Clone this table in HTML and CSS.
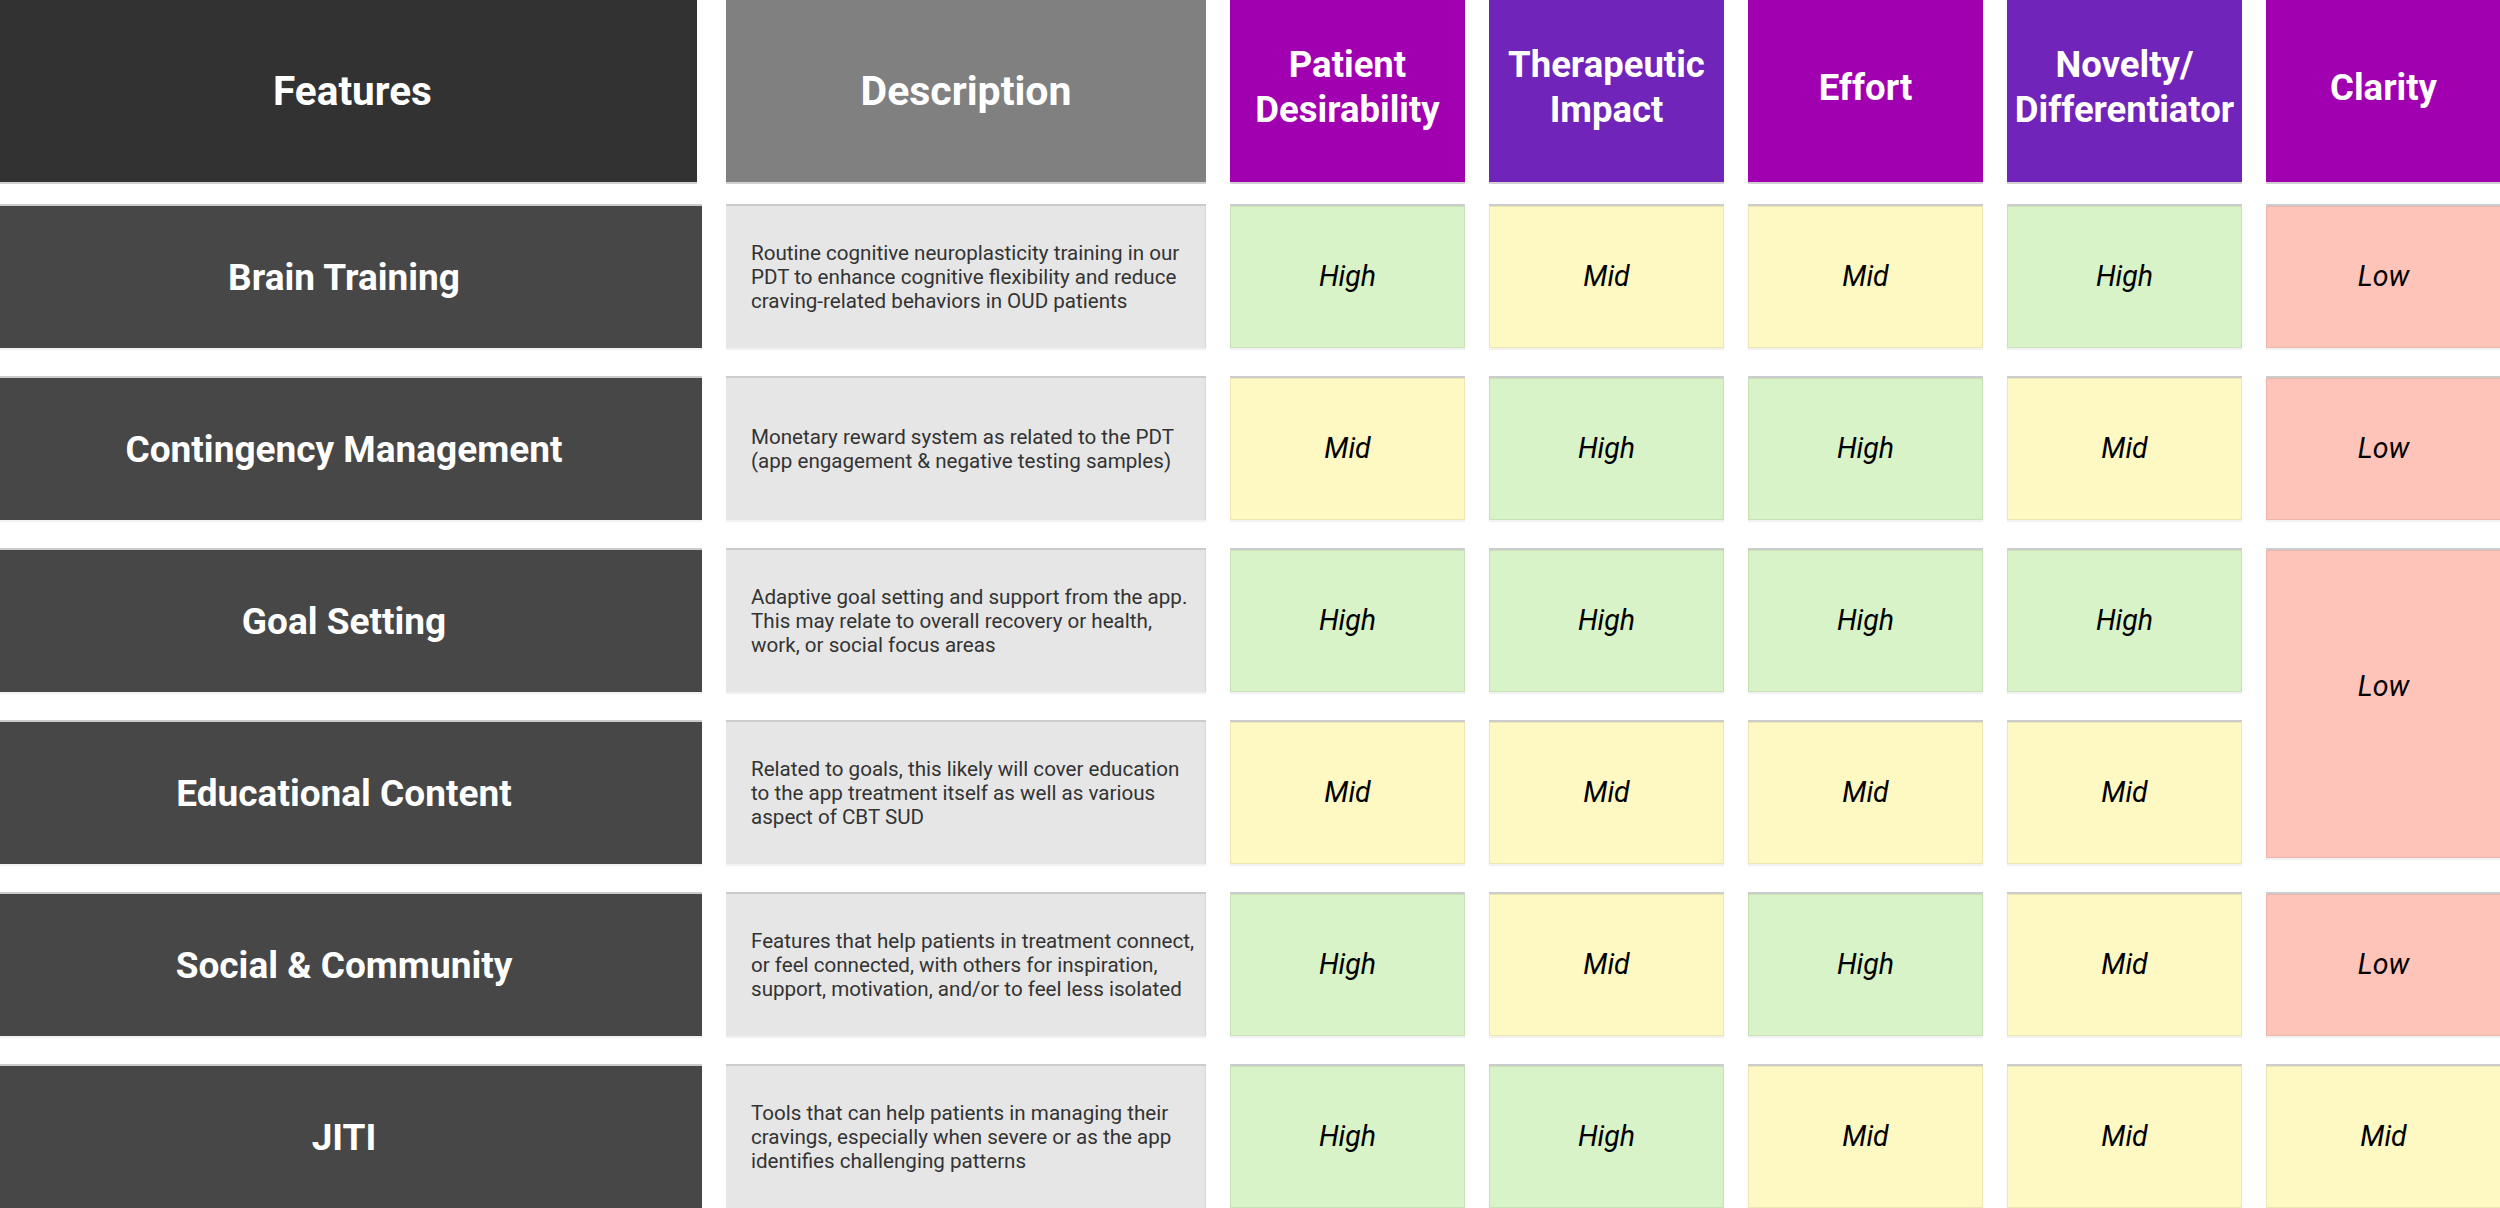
FILE: index.html
```html
<!DOCTYPE html>
<html>
<head>
<meta charset="utf-8">
<link rel="stylesheet" href="styles.css">
</head>
<body>
<div class="board">
  <div class="grid head">
    <div class="hcell h-feat">Features</div>
    <div class="hcell h-desc">Description</div>
    <div class="hcell h-crit magenta">Patient<br>Desirability</div>
    <div class="hcell h-crit violet">Therapeutic<br>Impact</div>
    <div class="hcell h-crit magenta">Effort</div>
    <div class="hcell h-crit violet">Novelty/<br>Differentiator</div>
    <div class="hcell h-crit magenta">Clarity</div>
  </div>

  <div class="grid body">
    <div class="cell feat">Brain Training</div>
    <div class="cell desc">Routine cognitive neuroplasticity training in our PDT to enhance cognitive flexibility and reduce craving-related behaviors in OUD patients</div>
    <div class="cell rate high">High</div>
    <div class="cell rate mid">Mid</div>
    <div class="cell rate mid">Mid</div>
    <div class="cell rate high">High</div>
    <div class="cell rate low">Low</div>

    <div class="cell feat">Contingency Management</div>
    <div class="cell desc">Monetary reward system as related to the PDT (app engagement &amp; negative testing samples)</div>
    <div class="cell rate mid">Mid</div>
    <div class="cell rate high">High</div>
    <div class="cell rate high">High</div>
    <div class="cell rate mid">Mid</div>
    <div class="cell rate low">Low</div>

    <div class="cell feat">Goal Setting</div>
    <div class="cell desc">Adaptive goal setting and support from the app. This may relate to overall recovery or health, work, or social focus areas</div>
    <div class="cell rate high">High</div>
    <div class="cell rate high">High</div>
    <div class="cell rate high">High</div>
    <div class="cell rate high">High</div>
    <div class="cell rate low merged">Low</div>

    <div class="cell feat">Educational Content</div>
    <div class="cell desc">Related to goals, this likely will cover education to the app treatment itself as well as various aspect of CBT SUD</div>
    <div class="cell rate mid">Mid</div>
    <div class="cell rate mid">Mid</div>
    <div class="cell rate mid">Mid</div>
    <div class="cell rate mid">Mid</div>

    <div class="cell feat">Social &amp; Community</div>
    <div class="cell desc">Features that help patients in treatment connect, or feel connected, with others for inspiration, support, motivation, and/or to feel less isolated</div>
    <div class="cell rate high">High</div>
    <div class="cell rate mid">Mid</div>
    <div class="cell rate high">High</div>
    <div class="cell rate mid">Mid</div>
    <div class="cell rate low">Low</div>

    <div class="cell feat">JITI</div>
    <div class="cell desc">Tools that can help patients in managing their cravings, especially when severe or as the app identifies challenging patterns</div>
    <div class="cell rate high">High</div>
    <div class="cell rate high">High</div>
    <div class="cell rate mid">Mid</div>
    <div class="cell rate mid">Mid</div>
    <div class="cell rate mid">Mid</div>
  </div>
</div>
</body>
</html>
```

FILE: styles.css
```css
html, body {
  margin: 0;
  padding: 0;
  background: #ffffff;
  overflow: hidden;
}

body {
  font-family: Roboto, "Liberation Sans", Arial, sans-serif;
  width: 2500px;
  height: 1208px;
}

.board {
  width: 2500px;
}

.grid {
  display: grid;
  grid-template-columns: 702px 480px repeat(5, 235px);
  column-gap: 24px;
}

.head {
  grid-template-rows: 182px;
}

.body {
  margin-top: 24px;
  grid-template-rows: repeat(6, 142px);
  row-gap: 30px;
}

.hcell {
  display: flex;
  align-items: center;
  justify-content: center;
  text-align: center;
  color: #ffffff;
  font-weight: 700;
  box-shadow: 0 2px 0 rgba(0, 0, 0, 0.18);
}

.h-feat {
  background: #323232;
  font-size: 40.5px;
  margin-right: 5px;
  padding-left: 8px;
}

.h-desc {
  background: #808080;
  font-size: 41px;
}

.h-crit {
  font-size: 36.5px;
  line-height: 45px;
  padding-bottom: 8px;
  white-space: nowrap;
}

.magenta {
  background: #a100b1;
}

.violet {
  background: #7024b9;
}

.cell {
  display: flex;
  align-items: center;
  box-sizing: border-box;
  box-shadow: 0 -2px 0 rgba(0, 0, 0, 0.2), 0 2px 1px rgba(0, 0, 0, 0.05);
}

.feat {
  background: #474747;
  color: #ffffff;
  font-weight: 700;
  font-size: 37px;
  justify-content: center;
  padding-right: 14px;
}

.desc {
  background: #e6e6e6;
  color: #333333;
  font-size: 20.6px;
  line-height: 24px;
  padding: 0 8px 0 25px;
  border-right: 1px solid #d8d8d8;
}

.rate {
  justify-content: center;
  font-style: italic;
  font-size: 28.5px;
  color: #000000;
  border: 1px solid rgba(0, 0, 0, 0.07);
  padding-bottom: 2px;
}

.high {
  background: #d9f3c8;
}

.mid {
  background: #fef8c2;
}

.low {
  background: #ffc4b9;
}

.merged {
  grid-row: span 2;
  margin-bottom: 6px;
  padding-bottom: 36px;
}
```
